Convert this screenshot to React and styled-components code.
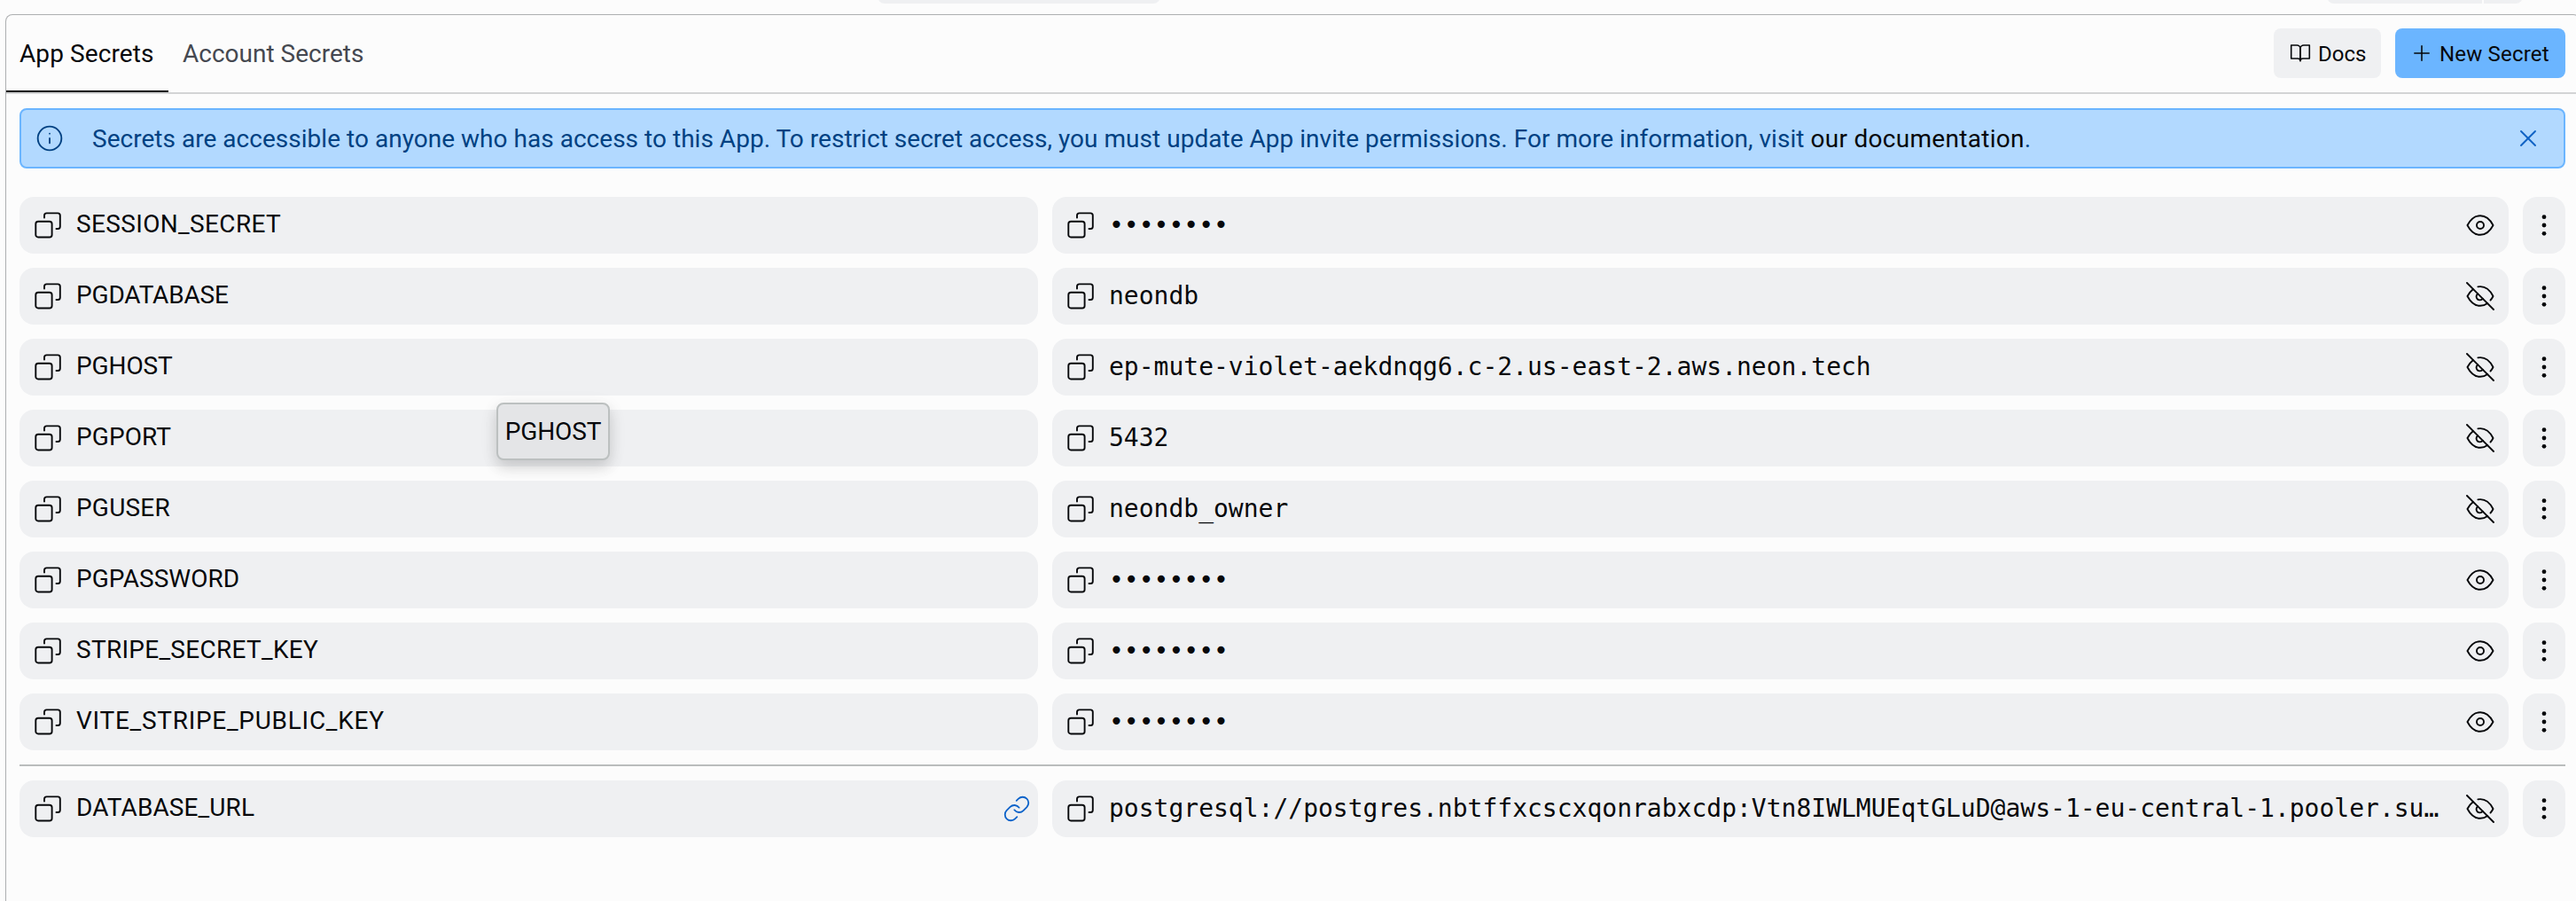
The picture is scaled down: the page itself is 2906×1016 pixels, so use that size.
import React from "react";
import styled, { createGlobalStyle } from "styled-components";
import { Info, X, Plus, Link } from "lucide-react";

const ink = "#07080b";
const surface = "#eff0f2";

const GlobalStyle = createGlobalStyle`
  *, *::before, *::after { box-sizing: border-box; }
  body {
    margin: 0;
    background: #fcfcfc;
    color: ${ink};
    font-family: Roboto, "Noto Sans", sans-serif;
    font-size: 28px;
    overflow: hidden;
  }
  button { font: inherit; color: inherit; border: 0; margin: 0; padding: 0; background: none; }
  svg { display: block; flex: none; }
`;

const Page = styled.div`
  position: relative;
  display: flex;
  flex-direction: column;
  height: 1016px;
  overflow: hidden;
`;

const TopStrip = styled.div`
  display: flex;
  align-items: flex-end;
  flex: none;
  height: 4px;
  margin-bottom: 12px;
  padding-left: 990px;
  overflow: hidden;
`;

const StripPill = styled.div`
  flex: none;
  width: ${(p) => p.$width}px;
  height: 48px;
  margin-left: ${(p) => p.$before || 0}px;
  background: ${surface};
  border-radius: ${(p) => p.$radius || "8px"};
`;

const Panel = styled.main`
  display: flex;
  flex-direction: column;
  flex: 1;
  width: 2905px;
  margin-left: 6px;
  border: 1px solid #adafb1;
  border-bottom: 0;
  border-radius: 8px 8px 0 0;
`;

const Header = styled.header`
  display: flex;
  justify-content: space-between;
  flex: none;
  height: 89px;
  padding-right: 16px;
  border-bottom: 2px solid #d3d4d5;
`;

const Tabs = styled.nav`
  display: flex;
`;

const Tab = styled.button`
  height: 87px;
  padding: 2px 16px 0 ${(p) => (p.$active ? 15 : 16)}px;
  width: ${(p) => (p.$active ? "183px" : "auto")};
  text-align: left;
  white-space: nowrap;
  color: ${(p) => (p.$active ? ink : "#454850")};
  letter-spacing: ${(p) => p.$track || 0}px;
  border-bottom: 2px solid ${(p) => (p.$active ? "#000" : "transparent")};
`;

const Actions = styled.div`
  display: flex;
  align-items: flex-start;
  gap: 16px;
  padding-top: 15px;
`;

const ActionButton = styled.button`
  display: flex;
  align-items: center;
  gap: 6px;
  width: ${(p) => p.$width}px;
  height: 56px;
  padding: 0 16px;
  border-radius: 8px;
  font-size: 24px;
  white-space: nowrap;
  letter-spacing: ${(p) => p.$track || 0}px;
  background: ${(p) => (p.$primary ? "#6bb5ff" : surface)};
`;

const ActionLabel = styled.span`
  padding-top: 2px;
`;

const Body = styled.section`
  display: flex;
  flex-direction: column;
  padding: 16px 16px 0 15px;
`;

const Banner = styled.div`
  display: flex;
  align-items: center;
  height: 68px;
  margin-bottom: 32px;
  padding: 0 24px 0 16px;
  border: 2px solid #6bb5ff;
  border-radius: 8px;
  background: #b2d9ff;
  color: #004182;
`;

const BannerText = styled.p`
  flex: 1;
  margin: 0 0 0 32px;
  white-space: nowrap;
  letter-spacing: 0.025px;
`;

const DocLink = styled.a`
  color: ${ink};
  letter-spacing: 0.3px;
`;

const CloseButton = styled.button`
  color: #0f62c4;
`;

const SecretList = styled.div`
  display: flex;
  flex-direction: column;
  gap: 16px;
`;

const SecretRow = styled.div`
  display: grid;
  grid-template-columns: 1149px 1643px 48px;
  gap: 16px;
  height: 64px;
`;

const Cell = styled.div`
  display: flex;
  align-items: center;
  gap: 16px;
  min-width: 0;
  padding: 0 ${(p) => p.$right || 16}px 0 16px;
  border-radius: 16px;
  background: ${surface};
`;

const KeyName = styled.span`
  flex: 1;
  padding-bottom: 3px;
  white-space: nowrap;
  letter-spacing: ${(p) => p.$track}px;
`;

const SecretValue = styled.span`
  flex: 1;
  padding-bottom: 2px;
  white-space: nowrap;
  font-family: "DejaVu Sans Mono", monospace;
`;

const MenuButton = styled.button`
  display: flex;
  align-items: center;
  justify-content: center;
  border-radius: 16px;
  background: ${surface};
`;

const LinkMark = styled.span`
  color: #0a62c9;
`;

const Divider = styled.hr`
  width: 100%;
  height: 2px;
  margin: 0;
  border: 0;
  background: #babdbd;
`;

const Tooltip = styled.div`
  position: absolute;
  left: 560px;
  top: 454px;
  display: flex;
  align-items: center;
  justify-content: center;
  width: 128px;
  height: 65px;
  border: 2px solid #bcc0c0;
  border-radius: 8px;
  background: #e4e5e7;
  letter-spacing: -0.1px;
  box-shadow: 0 8px 16px rgba(2, 2, 3, 0.14), 0 4px 24px rgba(2, 2, 3, 0.05);
`;

const stroke = {
  fill: "none",
  stroke: "currentColor",
  strokeWidth: 1.9,
  strokeLinecap: "round",
  strokeLinejoin: "round",
};

const CopyIcon = () => (
  <svg width="32" height="32" viewBox="0 0 32 32" {...stroke}>
    <rect x="2.3" y="11.7" width="18.3" height="17.8" rx="2.8" />
    <path d="M12 7.6V5a2.6 2.6 0 0 1 2.6-2.6h12.6A2.6 2.6 0 0 1 29.8 5v12.4a2.6 2.6 0 0 1-2.6 2.6h-1.7" />
  </svg>
);

const EyeIcon = () => (
  <svg width="32" height="32" viewBox="0 0 32 32" {...stroke}>
    <path d="M1.5 16C5 9.2 10 5.2 16 5.2S27 9.2 30.5 16C27 22.8 22 26.8 16 26.8S5 22.8 1.5 16z" />
    <circle cx="16" cy="16" r="4" />
  </svg>
);

const EyeOffIcon = () => (
  <svg width="32" height="32" viewBox="0 0 32 32" {...stroke}>
    <path d="M1 1l30 30" />
    <path d="M13.4 5.4C20.5 4.2 26.6 8.4 30.5 16c-.8 1.7-1.8 3.2-3 4.5" />
    <path d="M7.8 8.2C5.2 10.2 3.1 12.8 1.5 16 5 22.8 10 26.8 16 26.8c3 0 5.8-1 8.2-2.8" />
    <path d="M13.2 13.2a4 4 0 1 0 5.6 5.6" />
  </svg>
);

const DotsIcon = () => (
  <svg width="32" height="32" viewBox="0 0 32 32" fill="currentColor">
    <circle cx="16" cy="6.7" r="2.4" />
    <circle cx="16" cy="16" r="2.4" />
    <circle cx="16" cy="25.3" r="2.4" />
  </svg>
);

const BookIcon = () => (
  <svg width="28" height="28" viewBox="0 0 28 28" {...stroke} strokeWidth={1.6}>
    <path d="M3.7 5H10a4 4 0 0 1 4 4v13.6a2.8 2.8 0 0 0-2.8-2.6H3.7z" />
    <path d="M24.3 5H18a4 4 0 0 0-4 4v13.6a2.8 2.8 0 0 1 2.8-2.6h7.5z" />
  </svg>
);

const mask = "••••••••";

const secrets = [
  { name: "SESSION_SECRET", track: 0.35, value: mask, hidden: true },
  { name: "PGDATABASE", track: -0.17, value: "neondb" },
  { name: "PGHOST", track: -0.1, value: "ep-mute-violet-aekdnqg6.c-2.us-east-2.aws.neon.tech" },
  { name: "PGPORT", track: 0.08, value: "5432" },
  { name: "PGUSER", track: 0.2, value: "neondb_owner" },
  { name: "PGPASSWORD", track: 0.05, value: mask, hidden: true },
  { name: "STRIPE_SECRET_KEY", track: 0.28, value: mask, hidden: true },
  { name: "VITE_STRIPE_PUBLIC_KEY", track: 0.72, value: mask, hidden: true },
];

const linkedSecret = {
  name: "DATABASE_URL",
  track: 0.1,
  value:
    "postgresql://postgres.nbtffxcscxqonrabxcdp:Vtn8IWLMUEqtGLuD@aws-1-eu-central-1.pooler.su…",
  linked: true,
};

function Secret({ name, track, value, hidden, linked }) {
  return (
    <SecretRow>
      <Cell $right={linked ? 8 : 16}>
        <CopyIcon />
        <KeyName $track={track}>{name}</KeyName>
        {linked && (
          <LinkMark>
            <Link size={32} strokeWidth={1.35} />
          </LinkMark>
        )}
      </Cell>
      <Cell>
        <CopyIcon />
        <SecretValue>{value}</SecretValue>
        {hidden ? <EyeIcon /> : <EyeOffIcon />}
      </Cell>
      <MenuButton>
        <DotsIcon />
      </MenuButton>
    </SecretRow>
  );
}

export default function App() {
  return (
    <>
      <GlobalStyle />
      <Page>
        <TopStrip>
          <StripPill $width={319} />
          <StripPill $width={175} $before={1316} $radius="8px 0 0 8px" />
          <StripPill $width={44} $before={2} $radius="0 8px 8px 0" />
        </TopStrip>
        <Panel>
          <Header>
            <Tabs>
              <Tab $active $track={0.1}>App Secrets</Tab>
              <Tab>Account Secrets</Tab>
            </Tabs>
            <Actions>
              <ActionButton $width={121}>
                <BookIcon />
                <ActionLabel>Docs</ActionLabel>
              </ActionButton>
              <ActionButton $primary $width={192} $track={0.19}>
                <Plus size={28} strokeWidth={1.35} />
                <ActionLabel>New Secret</ActionLabel>
              </ActionButton>
            </Actions>
          </Header>
          <Body>
            <Banner>
              <Info size={32} strokeWidth={1.4} />
              <BannerText>
                Secrets are accessible to anyone who has access to this App. To restrict secret
                access, you must update App invite permissions. For more information, visit{" "}
                <DocLink>our documentation</DocLink>.
              </BannerText>
              <CloseButton>
                <X size={32} strokeWidth={1.4} />
              </CloseButton>
            </Banner>
            <SecretList>
              {secrets.map((s) => (
                <Secret key={s.name} {...s} />
              ))}
              <Divider />
              <Secret {...linkedSecret} />
            </SecretList>
          </Body>
        </Panel>
        <Tooltip>PGHOST</Tooltip>
      </Page>
    </>
  );
}
